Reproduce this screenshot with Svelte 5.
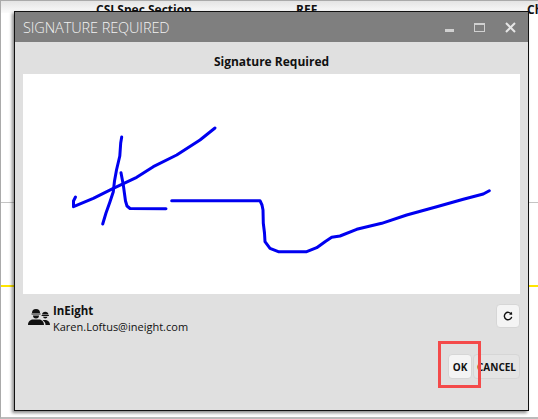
<script>
  const strokes = [
    'M121.7 137 L120.7 143 L119.8 156 L116.5 170 L114.5 181 L113.3 191.7 L110 201.7 L106 213 L102.7 224',
    'M75.5 197 L73.5 201 L73.5 206.7 L93.3 198.3 L113.3 188.3 L136.7 177.3 L153.3 166.7 L176.7 155 L200 140 L210 132 L215 128',
    'M121 172.7 L123.3 185 L125.5 201 L127 206 L130 208.5 L166 208.7',
    'M171.7 200.7 L260 200.7 L262 205 L263 210 L263.3 223.3 L264.5 233 L265 241.7 L270 248.3 L278.3 251.7 L306.7 251.7 L316.7 247.7 L325 241.7 L331.7 237.3 L340 236 L356.7 229.3 L381.7 223.3 L406.7 215 L436.7 206.7 L463.3 199.3 L483.3 194 L489.3 190.7'
  ];
</script>

<div class="screen">
  <div class="backdrop">
    <div class="head">
      <span class="col spec">CSI Spec Section</span>
      <span class="col ref">REF</span>
      <span class="col ch">Ch</span>
    </div>
  </div>

  <div class="dialog">
    <header class="titlebar">
      <span class="title">SIGNATURE REQUIRED</span>
      <div class="controls">
        <span class="min"></span>
        <span class="max"></span>
        <svg class="close" width="11" height="11" viewBox="0 0 11 11">
          <path d="M1 1 L10 10 M10 1 L1 10" stroke="#e6e6e6" stroke-width="2" />
        </svg>
      </div>
    </header>

    <div class="body">
      <h2>Signature Required</h2>
      <svg class="canvas" viewBox="23 74 497 220" width="497" height="220">
        {#each strokes as d}
          <path {d} fill="none" stroke="#0000f0" stroke-width="3" stroke-linecap="round" stroke-linejoin="round" />
        {/each}
      </svg>

      <div class="user">
        <svg class="users" width="22" height="20" viewBox="0 0 22 20">
          <path d="M4 5 a4 4 0 0 1 8 0 Z M3.5 5.6 h9 v1 h-9 Z M5 7.4 h6 a3 3 0 0 1 -6 0 Z M0 17 c0 -4 3 -5.5 5 -5.5 h6 c2 0 5 1.500 5 5.500 Z" fill="#111" />
          <path d="M14 6.500 a3.300 3.300 0 0 1 6.500 0 Z M13.600 7 h7.300 v1 h-7.300 Z M15 8.800 h4.500 a2.300 2.300 0 0 1 -4.500 0 Z M14.500 12 h2.500 c2.500 0 5 1.500 5 5 h-4.500 c0 -2 -1 -3.500 -3 -5 Z" fill="#111" />
        </svg>
        <div class="who">
          <strong>InEight</strong>
          <span>Karen.Loftus@ineight.com</span>
        </div>
        <button class="btn refresh" aria-label="Refresh">
          <svg width="10" height="10" viewBox="0 0 10 10">
            <path d="M8.300 3.200 A3.700 3.700 0 1 0 8.700 5.800" fill="none" stroke="#111" stroke-width="1.400" />
            <path d="M6 3.600 L9.200 3.800 L9 .8 Z" fill="#111" />
          </svg>
        </button>
      </div>

      <div class="actions">
        <span class="highlight"><button class="btn ok">OK</button></span>
        <button class="btn cancel">CANCEL</button>
      </div>
    </div>
  </div>
</div>

<style>
  :global(body) {
    margin: 0;
    background: #fff;
  }
  .screen {
    position: relative;
    width: 538px;
    height: 419px;
    overflow: hidden;
    font-family: "Open Sans", "Noto Sans", sans-serif;
    color: #111;
  }
  .backdrop {
    position: absolute;
    inset: 0;
    border-top: 1px solid #aaa;
    border-left: 1px solid #aaa;
    border-bottom: 2px solid #bbb;
    background:
      linear-gradient(#ffe600, #ffe600) 0 284px / 100% 2px no-repeat,
      linear-gradient(#c4c4c4, #c4c4c4) 0 201px / 100% 1px no-repeat,
      #fff;
  }
  .head {
    height: 12px;
    position: relative;
    background: linear-gradient(#e4e4e4, #fbfbfb);
    font-size: 12px;
    font-weight: 700;
    line-height: 17px;
  }
  .col {
    position: absolute;
    top: 0;
    white-space: nowrap;
  }
  .spec { left: 95px; }
  .ref { left: 295px; }
  .ch { left: 526px; }
  .dialog {
    position: absolute;
    left: 14px;
    top: 11px;
    width: 513px;
    height: 398px;
    border: 1px solid #111;
    background: #e0e0e0;
    box-shadow: -2px 2px 3px rgba(0, 0, 0, 0.45);
    display: flex;
    flex-direction: column;
  }
  .titlebar {
    height: 30px;
    background: #7f7f7f;
    display: flex;
    align-items: center;
    justify-content: space-between;
    padding: 0 12px 0 8px;
    flex: none;
  }
  .title {
    color: #f2f2f2;
    font-size: 14.5px;
    font-weight: 300;
    letter-spacing: -0.1px;
  }
  .controls {
    display: flex;
    align-items: center;
    gap: 20px;
  }
  .min {
    width: 9px;
    height: 3px;
    background: #d0d0d0;
    margin-top: 7px;
  }
  .max {
    width: 9px;
    height: 6px;
    border: 1px solid #d0d0d0;
    border-top-width: 2px;
  }
  .body {
    flex: 1;
    padding: 0 8px;
    display: flex;
    flex-direction: column;
  }
  h2 {
    margin: 0;
    height: 32px;
    font-size: 12px;
    font-weight: 700;
    line-height: 39px;
    text-align: center;
  }
  .canvas {
    display: block;
    background: #fff;
    flex: none;
  }
  .user {
    display: flex;
    align-items: flex-start;
    margin-top: 9px;
    padding-left: 5px;
    height: 31px;
  }
  .users {
    margin: 5px 3px 0 0;
    flex: none;
  }
  .who {
    display: flex;
    flex-direction: column;
    font-size: 11px;
    line-height: 16px;
    flex: 1;
  }
  .who strong {
    font-size: 11.5px;
  }
  .btn {
    font-family: inherit;
    font-size: 10px;
    font-weight: 700;
    color: #111;
    background: #f4f4f4;
    border: 1px solid #d6d6d6;
    border-radius: 4px;
    padding: 0;
    display: flex;
    align-items: center;
    justify-content: center;
  }
  .refresh {
    width: 24px;
    height: 24px;
    margin-top: 1px;
  }
  .actions {
    margin-top: 20px;
    display: flex;
    justify-content: flex-end;
    align-items: center;
    gap: 1px;
  }
  .highlight {
    position: relative;
    display: block;
  }
  .highlight::after {
    content: "";
    position: absolute;
    inset: -13px -9px -9px -10px;
    border: 3px solid #f44a4a;
    pointer-events: none;
  }
  .ok {
    width: 24px;
    height: 25px;
  }
  .cancel {
    width: 47px;
    height: 25px;
    background: #e4e4e4;
  }
</style>
